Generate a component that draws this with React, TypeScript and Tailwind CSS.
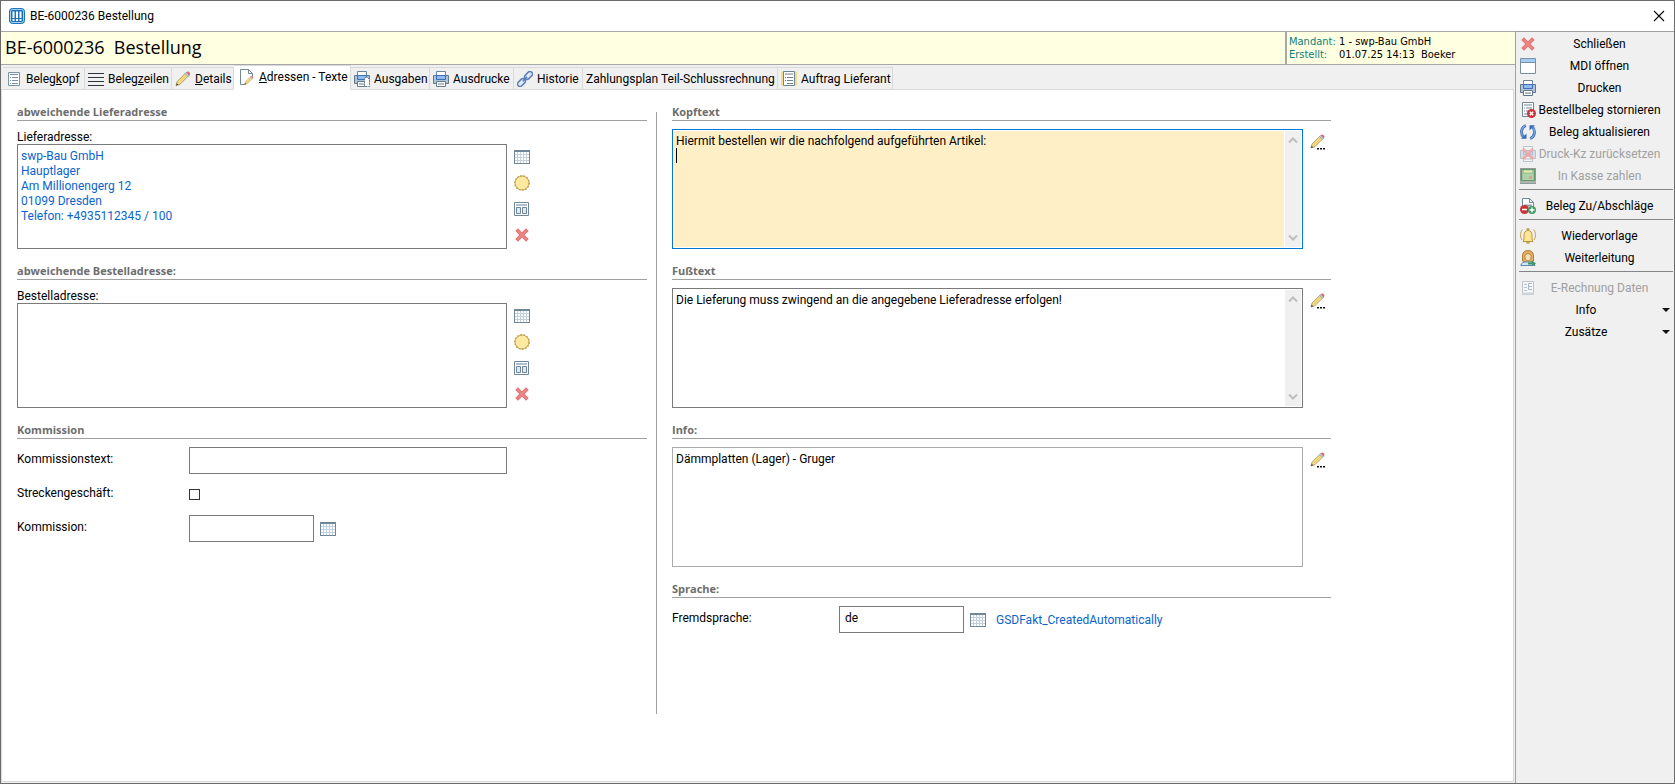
import { useState } from 'react';
import type { ReactNode } from 'react';
import clsx from 'clsx';

/* ---------- Icons ---------- */

function Svg({ children, className }: { children: ReactNode; className?: string }) {
    return (
        <svg viewBox="0 0 16 16" width="16" height="16" fill="none" className={clsx('shrink-0', className)} aria-hidden="true">
            {children}
        </svg>
    );
}

const AppIcon = () => (
    <Svg>
        <rect x="0.5" y="0.5" width="15" height="15" rx="3" fill="#1d74bd" stroke="#1d74bd" />
        <rect x="1.5" y="1.5" width="13" height="13" rx="2" stroke="#a9d0ee" />
        <path d="M4.5 3.5v6.5M8 3.5v6.5M11.5 3.5v6.5" stroke="#fff" strokeWidth="2" />
        <path d="M4.5 11v2M8 11v2M11.5 11v2" stroke="#fff" strokeWidth="2" />
    </Svg>
);

const FormIcon = () => (
    <Svg>
        <path d="M2.5 1.5h11v13h-11z" fill="#fff" stroke="#7b93a5" />
        <path d="M4 3.5h8" stroke="#7b93a5" />
        <path d="M4 6.5h1M4 9.5h1M4 12.5h1M6 6.5h6M6 9.5h6M6 12.5h6" stroke="#7b93a5" />
    </Svg>
);

const LinesIcon = () => (
    <Svg>
        <path d="M0 2.5h16M0 6.5h16M0 10.5h16M0 14.5h16" stroke="#2c3640" />
    </Svg>
);

const PencilShape = () => (
    <>
        <path d="M1 14.5l1.2-4L11 1.7l2.8 2.8L5 13.3z" fill="#fbe28b" stroke="#a68d4e" strokeWidth="0.9" />
        <path d="M3.6 11.9l7.8-7.8" stroke="#d6b75c" strokeWidth="0.8" />
        <path d="M10 2.7l1.4-1.4 3 3L13 5.7z" fill="#b9cbe0" stroke="#8ba0b8" strokeWidth="0.6" />
        <path d="M11.4 1.6l1-1c.8-.6 3.4 1.6 2.6 2.8l-1 1z" fill="#e36a6a" />
        <path d="M1 14.6l.8-2.4 1.6 1.5z" fill="#444" />
    </>
);

const PencilIcon = () => (
    <Svg>
        <PencilShape />
    </Svg>
);

const EditIcon = () => (
    <Svg>
        <g transform="scale(.96)">
            <PencilShape />
        </g>
        <path d="M7 14h2v1.5H7zM10 14h2v1.5h-2zM13 14h2v1.5h-2z" fill="#111" />
    </Svg>
);

const PageEditIcon = () => (
    <Svg>
        <path d="M6.5 15.5h-5V.5h8l4 4V7" fill="#fff" stroke="#6f8798" />
        <path d="M9.5 .5v4h4" stroke="#6f8798" />
        <g transform="translate(5 6.5) scale(.62)">
            <PencilShape />
        </g>
    </Svg>
);

const PrinterShape = () => (
    <>
        <path d="M3.5 .5h9v5h-9z" fill="#fff" stroke="#6b8496" />
        <path d="M.5 4.5h15v8H.5z" fill="#b1c3d9" stroke="#62798c" />
        <path d="M4 1h8v4H4z" fill="#fff" />
        <path d="M3.5 4.5h9v4h-9z" fill="#8fbbf5" stroke="#3f6fb5" />
        <path d="M3.5 10.5h9v5h-9z" fill="#fff" stroke="#62798c" />
        <path d="M5 13h6" stroke="#62798c" />
    </>
);

const PrinterIcon = () => (
    <Svg>
        <PrinterShape />
    </Svg>
);

const PrinterPageIcon = () => (
    <Svg>
        <PrinterShape />
        <path d="M10.5 6.5h3l2 2v7h-5z" fill="#fff" stroke="#62798c" strokeDasharray="2 1" />
    </Svg>
);

const PrinterResetIcon = () => (
    <Svg className="opacity-40">
        <PrinterShape />
        <path d="M3 3l10 10M13 3L3 13" stroke="#e04545" strokeWidth="3" />
    </Svg>
);

const ChainIcon = () => (
    <Svg>
        <g stroke="#5b7fb9" strokeWidth="1.5" transform="rotate(-45 8 8)">
            <rect x="-1.5" y="5.5" width="9" height="5" rx="2.5" fill="#dfe9f7" />
            <rect x="8.5" y="5.5" width="9" height="5" rx="2.5" fill="#dfe9f7" />
            <path d="M5 8h6" />
        </g>
    </Svg>
);

const OrderIcon = () => (
    <Svg>
        <path d="M0 .5h16v14H0z" fill="#f3dc8c" />
        <path d="M2.5 .5h11v14h-11z" fill="#fff" stroke="#6b8496" />
        <path d="M4 3h8" stroke="#6b8496" />
        <path d="M4 6.5h1M4 9.5h1M6 6.5h6M6 9.5h6M6 12.5h6" stroke="#6b8496" />
    </Svg>
);

const GridIcon = () => (
    <Svg>
        <path d="M.5 1.5h15v13H.5z" fill="#fff" stroke="#6f8798" />
        <path d="M1 5.5h14M1 8.5h14M1 11.5h14M3.5 3v11M6.5 3v11M9.5 3v11M12.5 3v11" stroke="#c3d0dd" />
        <path d="M0 2h16" stroke="#6f8798" strokeWidth="2" />
        <path d="M.5 1.5v13M15.5 1.5v13M0 14.5h16" stroke="#6f8798" />
    </Svg>
);

const SunIcon = () => (
    <Svg>
        <circle cx="8" cy="8" r="7" fill="#ffe9a0" stroke="#cdab55" strokeWidth="1" />
        <circle cx="8" cy="8" r="7.2" stroke="#b8984a" strokeWidth="1.3" strokeDasharray="1.6 1.6" />
    </Svg>
);

const LayoutIcon = () => (
    <Svg>
        <path d="M.5 1.5h14v13H.5z" fill="#fff" stroke="#6f8798" />
        <path d="M2 4h11" stroke="#b0bfd0" strokeWidth="2" />
        <path d="M2.5 6.5h4v6h-4zM8.5 6.5h4v6h-4z" fill="#dfe8f0" stroke="#6f8798" />
    </Svg>
);

const DeleteIcon = () => (
    <Svg>
        <path d="M4 4l8 8M12 4l-8 8" stroke="#e07070" strokeWidth="3.8" strokeLinecap="square" />
        <path d="M4 4l8 8M12 4l-8 8" stroke="#ee8484" strokeWidth="2" strokeLinecap="square" />
    </Svg>
);

const WindowIcon = () => (
    <Svg>
        <path d="M.5 .5h15v15H.5z" fill="#fff" stroke="#7891a6" />
        <path d="M1 2.5h14" stroke="#9fcdf5" strokeWidth="3" />
        <path d="M.5 4.5h15" stroke="#7891a6" />
    </Svg>
);

const CancelDocIcon = () => (
    <Svg>
        <path d="M2.5 .5h11v14h-11z" fill="#fff" stroke="#6f8798" />
        <path d="M4 3h8" stroke="#6f8798" />
        <path d="M4 6h1M4 9h1M6 6h6M6 9h2M4 12h3" stroke="#6f8798" />
        <circle cx="11.5" cy="11.5" r="4.5" fill="#c9343b" />
        <path d="M9.8 9.8l3.4 3.4M13.2 9.8l-3.4 3.4" stroke="#fff" strokeWidth="1.5" />
    </Svg>
);

const RefreshIcon = () => (
    <Svg>
        <path d="M6 1.5C1 3 0 10 4 13.5" stroke="#3c6cb4" strokeWidth="2.8" />
        <path d="M10 14.5c5-1.5 6-8.5 2-12" stroke="#3c6cb4" strokeWidth="2.8" />
        <path d="M6 1.5C1 3 0 10 4 13.5M10 14.5c5-1.5 6-8.5 2-12" stroke="#7ba8e6" strokeWidth="1.3" />
        <path d="M1 14.8h5.5V9.5z" fill="#3c6cb4" />
        <path d="M15 1.2H9.5v5.3z" fill="#3c6cb4" />
    </Svg>
);

const CashIcon = () => (
    <Svg>
        <path d="M0 0h16v16H0z" fill="#8f9b94" />
        <path d="M1.5 1.5h13v11h-13z" fill="#98c596" stroke="#68986d" />
        <path d="M4 3.5h8" stroke="#ecebb0" strokeWidth="2" />
        <path d="M3.5 7h9M3.5 9h9M3.5 11h9" stroke="#f1f7e8" strokeDasharray="1 1" />
        <path d="M10.5 8v3" stroke="#e0958d" strokeWidth="2" />
        <path d="M0 14h16" stroke="#c5cbc7" />
    </Svg>
);

const SurchargeIcon = () => (
    <Svg>
        <path d="M2.5 9V.5h7l4 4V9" fill="#fff" stroke="#6f8798" />
        <path d="M9.5 .5v4h4" stroke="#6f8798" />
        <path d="M4 7.5h8" stroke="#8da0af" strokeWidth="2" />
        <circle cx="4.5" cy="11.5" r="4.5" fill="#c9343b" />
        <circle cx="12" cy="12" r="4" fill="#449c64" />
        <path d="M2 11.5h5M9.5 12h5M12 9.5v5" stroke="#fff" strokeWidth="1.3" />
    </Svg>
);

const BellIcon = () => (
    <Svg>
        <path d="M2.5 1.5C0 4 0 9 2 12M13.5 1.5C16 4 16 9 14 12" stroke="#c4a24a" />
        <path d="M3 13.5c1.2-1.5 1-3.5 1-6 0-3 1.5-5 4-5s4 2 4 5c0 2.5-.2 4.5 1 6z" fill="#ffe694" stroke="#b6933d" />
        <path d="M7 2V.6h2V2M6.5 14c0 2 3 2 3 0" fill="#e4c262" stroke="#b6933d" strokeWidth=".8" />
    </Svg>
);

const ForwardIcon = () => (
    <Svg>
        <path d="M2.5 11V6C2.5 2.5 4.5 .6 8 .6s5.5 2 5.5 5.4v5c-1.5 1-3 .8-4 0H6.5c-1 .8-2.5 1-4 0z" fill="#e3b060" stroke="#a9752c" strokeWidth=".9" />
        <path d="M.8 15.5c.4-2.8 3-3.5 5.2-3.5h4c2.2 0 4.2.7 5 3.5z" fill="#cfe6fa" stroke="#5d87b0" />
        <path d="M5 6.5c0-2 1-2.7 3-2.7s3 .7 3 2.7c0 2.5-1.2 4.5-3 4.5s-3-2-3-4.5z" fill="#fbe0b8" stroke="#a9752c" strokeWidth=".8" />
        <path d="M8 12.5h4v-2l4 3-4 2.5v-1.5H8z" fill="#3d9960" />
    </Svg>
);

const EInvoiceIcon = () => (
    <Svg className="opacity-40">
        <path d="M2.5 1.5h11v13h-11z" fill="#fff" stroke="#6f8798" />
        <path d="M4 4.5h3M4 7.5h3M4 10.5h3" stroke="#6f8798" />
        <path d="M12 3.5H8.5v6H12M8.5 6.5H12" stroke="#3f68a0" />
        <path d="M2 13.5h12" stroke="#9fb2c2" strokeWidth="2" />
    </Svg>
);

/* ---------- Form parts ---------- */

function Section({ title, children }: { title: string; children: ReactNode }) {
    return (
        <section className="mb-[15px]">
            <h2 className="h-4 border-b border-[#a0a0a0] font-['Open_Sans','Noto_Sans',sans-serif] text-[11px] font-bold leading-[14px] text-[#6d6d6d]">
                {title}
            </h2>
            {children}
        </section>
    );
}

function IconButton({ label, children }: { label: string; children: ReactNode }) {
    return (
        <button type="button" aria-label={label} title={label} className="size-4 shrink-0">
            {children}
        </button>
    );
}

function AddressBox({ id, label, value }: { id: string; label: string; value: string }) {
    return (
        <>
            <label htmlFor={id} className="mt-2 block h-[15px] leading-[16px]">
                {label}
            </label>
            <div className="flex gap-[7px]">
                <textarea
                    id={id}
                    defaultValue={value}
                    className="h-[105px] max-w-[490px] flex-1 resize-none border border-[#7a7a7a] px-[3px] py-1 leading-[15px] text-[#0a64cc] outline-none"
                />
                <div className="flex flex-col gap-[10px] pt-[5px]">
                    <IconButton label="Auswählen"><GridIcon /></IconButton>
                    <IconButton label="Neu"><SunIcon /></IconButton>
                    <IconButton label="Formular"><LayoutIcon /></IconButton>
                    <IconButton label="Entfernen"><DeleteIcon /></IconButton>
                </div>
            </div>
        </>
    );
}

function ScrollBar() {
    return (
        <div className="flex w-4 shrink-0 flex-col justify-between bg-[#f0f0f0] py-[5px]">
            <svg viewBox="0 0 16 8" width="16" height="8" fill="none" stroke="#bdbdbd" strokeWidth="2">
                <path d="M4 6.5l4-4 4 4" />
            </svg>
            <svg viewBox="0 0 16 8" width="16" height="8" fill="none" stroke="#bdbdbd" strokeWidth="2">
                <path d="M4 1.5l4 4 4-4" />
            </svg>
        </div>
    );
}

interface MemoProps {
    label: string;
    value: string;
    focused?: boolean;
    scroll?: boolean;
}

function Memo({ label, value, focused, scroll }: MemoProps) {
    return (
        <div className="mt-2 flex gap-[7px]">
            <div
                className={clsx(
                    'relative flex h-[120px] max-w-[631px] flex-1 gap-px border p-px',
                    focused ? 'border-[#0078d7]' : scroll ? 'border-[#7a7a7a]' : 'border-[#ababab]'
                )}
            >
                <textarea
                    aria-label={label}
                    defaultValue={value}
                    className={clsx(
                        'min-w-0 flex-1 resize-none overflow-hidden px-[2px] py-[3px] leading-[15px] outline-none',
                        focused ? 'bg-[#ffefc6]' : 'bg-white'
                    )}
                />
                {scroll && <ScrollBar />}
                {focused && <span className="absolute left-[3px] top-[18px] h-[15px] w-px bg-black" />}
            </div>
            <div className="pt-[5px]">
                <IconButton label={`${label} bearbeiten`}><EditIcon /></IconButton>
            </div>
        </div>
    );
}

/* ---------- Data ---------- */

const tabs = [
    { icon: <FormIcon />, label: <>Beleg<u>k</u>opf</>, width: 'w-[82px]' },
    { icon: <LinesIcon />, label: <>Beleg<u>z</u>eilen</>, width: 'w-[87px]' },
    { icon: <PencilIcon />, label: <><u>D</u>etails</>, width: 'w-[62px]' },
    { icon: <PageEditIcon />, label: <><u>A</u>dressen - Texte</>, width: 'w-[117px]' },
    { icon: <PrinterPageIcon />, label: 'Ausgaben', width: 'w-[79px]' },
    { icon: <PrinterIcon />, label: 'Ausdrucke', width: 'w-[84px]' },
    { icon: <ChainIcon />, label: 'Historie', width: 'w-[69px]' },
    { icon: null, label: 'Zahlungsplan Teil-Schlussrechnung', width: 'w-[195px]' },
    { icon: <OrderIcon />, label: 'Auftrag Lieferant', width: 'w-[115px]' },
];

const actionGroups = [
    [
        { icon: <DeleteIcon />, label: 'Schließen' },
        { icon: <WindowIcon />, label: 'MDI öffnen' },
        { icon: <PrinterIcon />, label: 'Drucken' },
        { icon: <CancelDocIcon />, label: 'Bestellbeleg stornieren' },
        { icon: <RefreshIcon />, label: 'Beleg aktualisieren' },
        { icon: <PrinterResetIcon />, label: 'Druck-Kz zurücksetzen', disabled: true },
        { icon: <CashIcon />, label: 'In Kasse zahlen', disabled: true },
    ],
    [{ icon: <SurchargeIcon />, label: 'Beleg Zu/Abschläge' }],
    [
        { icon: <BellIcon />, label: 'Wiedervorlage' },
        { icon: <ForwardIcon />, label: 'Weiterleitung' },
    ],
    [
        { icon: <EInvoiceIcon />, label: 'E-Rechnung Daten', disabled: true },
        { label: 'Info', menu: true },
        { label: 'Zusätze', menu: true },
    ],
] as { icon?: ReactNode; label: string; disabled?: boolean; menu?: boolean }[][];

const address = `swp-Bau GmbH
Hauptlager
Am Millionengerg 12
01099 Dresden
Telefon: +4935112345 / 100`;

export default function App() {
    const [activeTab, setActiveTab] = useState(3);

    return (
        <div className="flex min-h-screen flex-col border border-[#6b6b6b] bg-white font-['Roboto','Open_Sans',sans-serif] text-[12px] text-black">
            {/* Title bar */}
            <div className="flex h-[30px] items-center gap-[5px] pl-2 pr-[9px]">
                <AppIcon />
                <span>BE-6000236 Bestellung</span>
                <button type="button" aria-label="Fenster schließen" className="ml-auto">
                    <svg viewBox="0 0 12 12" width="12" height="12" stroke="#000" strokeWidth="1.1">
                        <path d="M1 1l10 10M11 1L1 11" />
                    </svg>
                </button>
            </div>

            <div className="flex flex-1">
                <main className="flex min-w-0 flex-1 flex-col bg-[#f0f0f0]">
                    {/* Document header */}
                    <header className="flex h-[34px] shrink-0 border-y border-[#a8a8a8] bg-[#ffffe1]">
                        <h1 className="flex-1 whitespace-pre pl-1 font-['Open_Sans','Noto_Sans',sans-serif] text-[18px] leading-[30px]">BE-6000236  Bestellung</h1>
                        <dl className="grid w-[230px] grid-cols-[50px_1fr] content-center border-l-2 border-[#a8a8a8] pl-[2px] font-['DejaVu_Sans_Condensed','DejaVu_Sans',sans-serif] text-[11px] leading-[13px]">
                            <dt className="text-[#0d8080]">Mandant:</dt>
                            <dd>1 - swp-Bau GmbH</dd>
                            <dt className="text-[#0d8080]">Erstellt:</dt>
                            <dd className="whitespace-pre">01.07.25 14:13  Boeker</dd>
                        </dl>
                    </header>

                    {/* Tabs */}
                    <div role="tablist" className="flex h-6 shrink-0 items-end pl-[2px]">
                        {tabs.map((tab, i) => (
                            <button
                                key={i}
                                type="button"
                                role="tab"
                                aria-selected={i === activeTab}
                                onClick={() => setActiveTab(i)}
                                className={clsx(
                                    'flex shrink-0 items-center gap-1 whitespace-nowrap border-r border-t border-[#dadada]',
                                    tab.width,
                                    i === activeTab ? 'z-10 -mb-px h-[25px] bg-white pb-[2px] pl-[5px]' : 'h-[22px] pl-[3px]'
                                )}
                            >
                                {tab.icon}
                                <span>{tab.label}</span>
                            </button>
                        ))}
                    </div>

                    {/* Tab panel */}
                    <div role="tabpanel" className="mb-px mr-px flex flex-1 border border-[#dadada] bg-white pl-[15px] pt-[15px]">
                        <div className="min-w-0 max-w-[630px] flex-1">
                            <Section title="abweichende Lieferadresse">
                                <AddressBox id="lieferadresse" label="Lieferadresse:" value={address} />
                            </Section>
                            <Section title="abweichende Bestelladresse:">
                                <AddressBox id="bestelladresse" label="Bestelladresse:" value="" />
                            </Section>
                            <Section title="Kommission">
                                <div className="mt-2 grid grid-cols-[172px_1fr] items-center gap-y-[7px]">
                                    <label htmlFor="kommissionstext" className="pb-[3px]">Kommissionstext:</label>
                                    <input id="kommissionstext" className="h-[27px] w-full max-w-[318px] border border-[#7a7a7a] px-1 outline-none" />
                                    <label htmlFor="strecke" className="pb-[3px]">Streckengeschäft:</label>
                                    <div className="flex h-[27px] items-center">
                                        <input id="strecke" type="checkbox" className="size-[11px] appearance-none border border-[#333] bg-white checked:bg-[#333]" />
                                    </div>
                                    <label htmlFor="kommission" className="pb-[3px]">Kommission:</label>
                                    <div className="flex items-center gap-[6px]">
                                        <input id="kommission" className="h-[27px] w-[125px] border border-[#7a7a7a] px-1 outline-none" />
                                        <IconButton label="Kommission auswählen"><GridIcon /></IconButton>
                                    </div>
                                </div>
                            </Section>
                        </div>

                        <div className="mb-[67px] ml-[9px] mr-[15px] mt-[7px] w-px bg-[#a0a0a0]" />

                        <div className="min-w-0 max-w-[659px] flex-1">
                            <Section title="Kopftext">
                                <Memo label="Kopftext" value={'Hiermit bestellen wir die nachfolgend aufgeführten Artikel:\n'} focused scroll />
                            </Section>
                            <Section title="Fußtext">
                                <Memo label="Fußtext" value="Die Lieferung muss zwingend an die angegebene Lieferadresse erfolgen!" scroll />
                            </Section>
                            <Section title="Info:">
                                <Memo label="Info" value="Dämmplatten (Lager) - Gruger" />
                            </Section>
                            <Section title="Sprache:">
                                <div className="mt-2 flex items-center">
                                    <label htmlFor="sprache" className="w-[167px] pb-[3px]">Fremdsprache:</label>
                                    <input id="sprache" defaultValue="de" className="h-[27px] w-[125px] border border-[#7a7a7a] px-[5px] pb-[3px] outline-none" />
                                    <div className="ml-[6px] flex items-center gap-[10px]">
                                        <IconButton label="Sprache auswählen"><GridIcon /></IconButton>
                                        <a href="#sprache" className="text-[#0a64cc]">GSDFakt_CreatedAutomatically</a>
                                    </div>
                                </div>
                            </Section>
                        </div>
                    </div>
                </main>

                {/* Actions */}
                <aside className="w-[159px] shrink-0 border-l border-t border-[#a0a0a0] bg-[#f0f0f0] pl-[3px] pr-px pt-px">
                    {actionGroups.map((group, g) => (
                        <div key={g} className={clsx(g > 0 && 'mt-[2px] border-t border-[#858585] pt-[5px]')}>
                            {group.map((action) => (
                                <button
                                    key={action.label}
                                    type="button"
                                    disabled={action.disabled}
                                    className="flex h-[22px] w-full items-center pl-px disabled:text-[#a0a0a0]"
                                >
                                    {action.icon}
                                    <span className="flex-1 whitespace-nowrap pr-[10px] text-center">{action.label}</span>
                                    {action.menu && (
                                        <svg viewBox="0 0 8 4" width="8" height="4" className="mr-[3px]">
                                            <path d="M0 0h8L4 4z" fill="#111" />
                                        </svg>
                                    )}
                                </button>
                            ))}
                        </div>
                    ))}
                </aside>
            </div>
        </div>
    );
}
